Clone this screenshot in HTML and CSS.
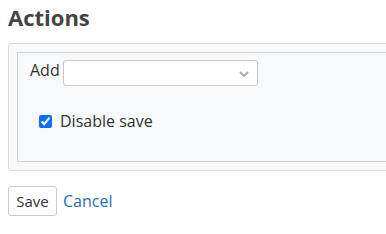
FILE: index.html
```html
<!DOCTYPE html>
<html lang="en">
<head>
    <meta charset="UTF-8">
    <title>Actions</title>
    <link rel="stylesheet" href="styles.css">
</head>
<body>
    <h2 class="title">Actions</h2>
    <div class="panel">
        <div class="fieldset">
            <div class="add-row">
                <label for="add">Add</label>
                <div class="select">
                    <select id="add"><option></option></select>
                    <svg class="chevron" width="10" height="6" viewBox="0 0 10 6">
                        <path d="M1 1 L5 5 L9 1" fill="none" stroke="#aaa" stroke-width="1.8"/>
                    </svg>
                </div>
            </div>
            <label class="check">
                <input type="checkbox" checked>
                <span>Disable save</span>
            </label>
        </div>
    </div>
    <div class="actions">
        <button class="btn">Save</button>
        <a href="#" class="cancel">Cancel</a>
    </div>
</body>
</html>
```

FILE: styles.css
```css
body {
    margin: 0;
    padding: 0 8px;
    font-family: "Open Sans", sans-serif;
    font-size: 16px;
    color: #333;
    background: #fff;
    overflow: hidden;
}

.title {
    margin: 0;
    padding-top: 2px;
    height: 41px;
    font-size: 22px;
    font-weight: bold;
    line-height: 30px;
    color: #444;
}

.panel {
    width: 380px;
    margin-right: -20px;
    background: #f8f9fa;
    border: 1px solid #d9dde2;
    border-radius: 3px;
    padding: 8px;
}

.fieldset {
    border: 1px solid #cfd3d8;
    padding: 7px 12px 28px;
}

.add-row {
    display: flex;
    align-items: flex-start;
    gap: 3px;
}

.add-row label {
    line-height: 24px;
    margin-top: -2px;
}

.select {
    position: relative;
    width: 195px;
    height: 26px;
}

.select select {
    appearance: none;
    width: 100%;
    height: 100%;
    background: #fff;
    border: 1px solid #c8c8c8;
    border-radius: 3px;
    margin: 0;
}

.chevron {
    position: absolute;
    right: 9px;
    top: 11px;
}

.check {
    display: flex;
    align-items: center;
    gap: 8px;
    margin-top: 23px;
    padding-left: 9px;
    line-height: 24px;
}

.check input {
    margin: 0;
    width: 13px;
    height: 13px;
    accent-color: #0d6efd;
}

.actions {
    display: flex;
    align-items: center;
    gap: 6px;
    margin-top: 15px;
}

.btn {
    width: 49px;
    height: 30px;
    font-family: "Open Sans", sans-serif;
    font-size: 15px;
    color: #333;
    background: #fff;
    border: 1px solid #ccc;
    border-radius: 3px;
    padding: 0;
}

.cancel {
    color: #1f6fb5;
    text-decoration: none;
    font-size: 16px;
}
```
